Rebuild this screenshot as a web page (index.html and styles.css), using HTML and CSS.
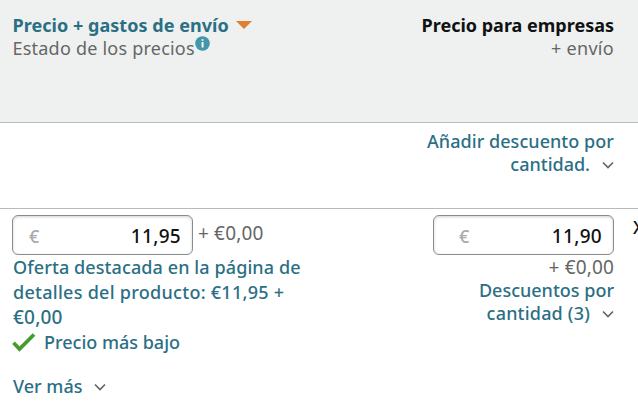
FILE: index.html
```html
<!DOCTYPE html>
<html lang="es">
<head>
  <meta charset="UTF-8">
  <meta name="viewport" content="width=device-width, initial-scale=1.0">
  <title>Precios</title>
  <link rel="stylesheet" href="styles.css">
</head>
<body>
  <div class="table">
    <div class="row head">
      <div class="cell">
        <div class="title-line"><a class="title-link">Precio + gastos de envío</a><svg class="sort" width="16" height="8" viewBox="0 0 16 8"><path d="M0 0h16L8 8z" fill="#dd8033"/></svg></div>
        <div class="sub-line"><span class="muted status">Estado de los precios</span><svg class="info" width="15" height="15" viewBox="0 0 15 15"><circle cx="7.5" cy="7.5" r="7.3" fill="#4497aa"/><path d="M6.6 3.2h1.9v1.6H6.6zM6.6 6h1.9v5.4H6.6z" fill="#fff"/></svg></div>
      </div>
      <div class="cell right">
        <div class="title">Precio para empresas</div>
        <div class="muted shipping">+ envío</div>
      </div>
    </div>

    <div class="row discount">
      <div class="cell"></div>
      <div class="cell right">
        <a class="add">Añadir descuento por</a>
        <div class="more"><a class="add-qty">cantidad.</a><svg class="chevron" width="12" height="8" viewBox="0 0 12 8"><path d="M1 1.5l5 5 5-5"/></svg></div>
      </div>
    </div>

    <div class="row product">
      <div class="cell">
        <div class="price-line">
          <label class="price"><span>€</span><input type="text" value="11,95"></label>
          <span class="muted cost">+ €0,00</span>
        </div>
        <div class="offer">
          <a class="offer-1">Oferta destacada en la página de</a>
          <a class="offer-2">detalles del producto: €11,95 +</a>
          <a class="offer-3">€0,00</a>
        </div>
        <div class="lowest"><svg class="check" width="24" height="19" viewBox="0 0 24 19"><path d="M1.5 9.8l6 6.2L22 1.5" fill="none" stroke="#469b30" stroke-width="3.7"/></svg><a>Precio más bajo</a></div>
        <div class="see-more"><a>Ver más</a><svg class="chevron" width="12" height="8" viewBox="0 0 12 8"><path d="M1 1.5l5 5 5-5"/></svg></div>
      </div>
      <div class="cell right">
        <label class="price business"><span>€</span><input type="text" value="11,90"></label>
        <span class="muted cost">+ €0,00</span>
        <a class="tiers">Descuentos por</a>
        <div class="more"><a class="tiers-qty">cantidad (3)</a><svg class="chevron" width="12" height="8" viewBox="0 0 12 8"><path d="M1 1.5l5 5 5-5"/></svg></div>
      </div>
      <div class="next">X</div>
    </div>
  </div>
</body>
</html>
```

FILE: styles.css
```css
* {
  box-sizing: border-box;
}
body {
  margin: 0;
  background: #fff;
  color: #111;
  font-family: "Noto Sans", sans-serif;
  font-size: 18px;
  font-weight: 500;
  line-height: 23px;
  overflow: hidden;
}
a {
  color: #2b6f85;
  text-decoration: none;
}
.table {
  width: 638px;
  height: 404px;
  overflow: hidden;
}
.row {
  display: grid;
  grid-template-columns: 300px 302px 24px;
  padding-left: 12px;
  white-space: nowrap;
}
.head {
  height: 123px;
  padding-top: 14px;
  background: #eff1f1;
  border-bottom: 1px solid #b9baba;
}
.discount {
  height: 86px;
  padding-top: 7px;
  border-bottom: 1px solid #b9baba;
}
.product {
  padding-top: 6px;
}
.right {
  display: flex;
  flex-direction: column;
  align-items: flex-end;
}
.muted {
  color: #666;
  font-weight: 400;
}
.title,
.title-link {
  font-weight: 700;
}
.title-link {
  letter-spacing: 0.04px;
}
.title-line,
.sub-line,
.more,
.price-line,
.lowest,
.see-more {
  display: flex;
}
.title-line {
  align-items: center;
}
.sort {
  margin: -1px 0 0 7px;
}
.status {
  letter-spacing: 0.22px;
}
.shipping {
  letter-spacing: 0.3px;
}
.info {
  margin-top: -1px;
}
.more {
  align-items: center;
  gap: 12px;
}
.chevron {
  flex: none;
  fill: none;
  stroke: #666;
  stroke-width: 1.7;
}
.price {
  display: flex;
  align-items: center;
  width: 181px;
  height: 40px;
  padding: 2px 11px 0 16px;
  border: 1px solid #888c8c;
  border-radius: 6px;
  background: #fff;
  box-shadow: inset 0 1px 3px rgba(0, 0, 0, 0.18);
}
.price span {
  color: #aaa;
}
.price input {
  width: 100%;
  min-width: 0;
  padding: 0;
  border: 0;
  outline: 0;
  background: transparent;
  color: #111;
  font: inherit;
  font-size: 19px;
  letter-spacing: 0.3px;
  text-align: right;
}
.business {
  padding-left: 25px;
  margin-bottom: 1px;
}
.cost {
  font-size: 19px;
  letter-spacing: 0.15px;
}
.price-line {
  gap: 5px;
}
.price-line .cost {
  padding-top: 7px;
}
.offer {
  display: flex;
  flex-direction: column;
  padding-left: 1px;
  line-height: 25px;
}
.offer-1 {
  letter-spacing: 0.1px;
}
.offer-2 {
  letter-spacing: 0.28px;
}
.offer-3 {
  font-size: 19px;
  letter-spacing: 0.2px;
}
.lowest {
  align-items: center;
  height: 25px;
  gap: 8px;
}
.see-more {
  align-items: center;
  margin-top: 20px;
  padding-left: 1px;
  gap: 12px;
}
.title-line,
.sub-line {
  padding-left: 0.5px;
}
.add {
  letter-spacing: 0.05px;
}
.tiers-qty {
  letter-spacing: 0.2px;
}
.next {
  padding: 1px 0 0 19px;
}
```
